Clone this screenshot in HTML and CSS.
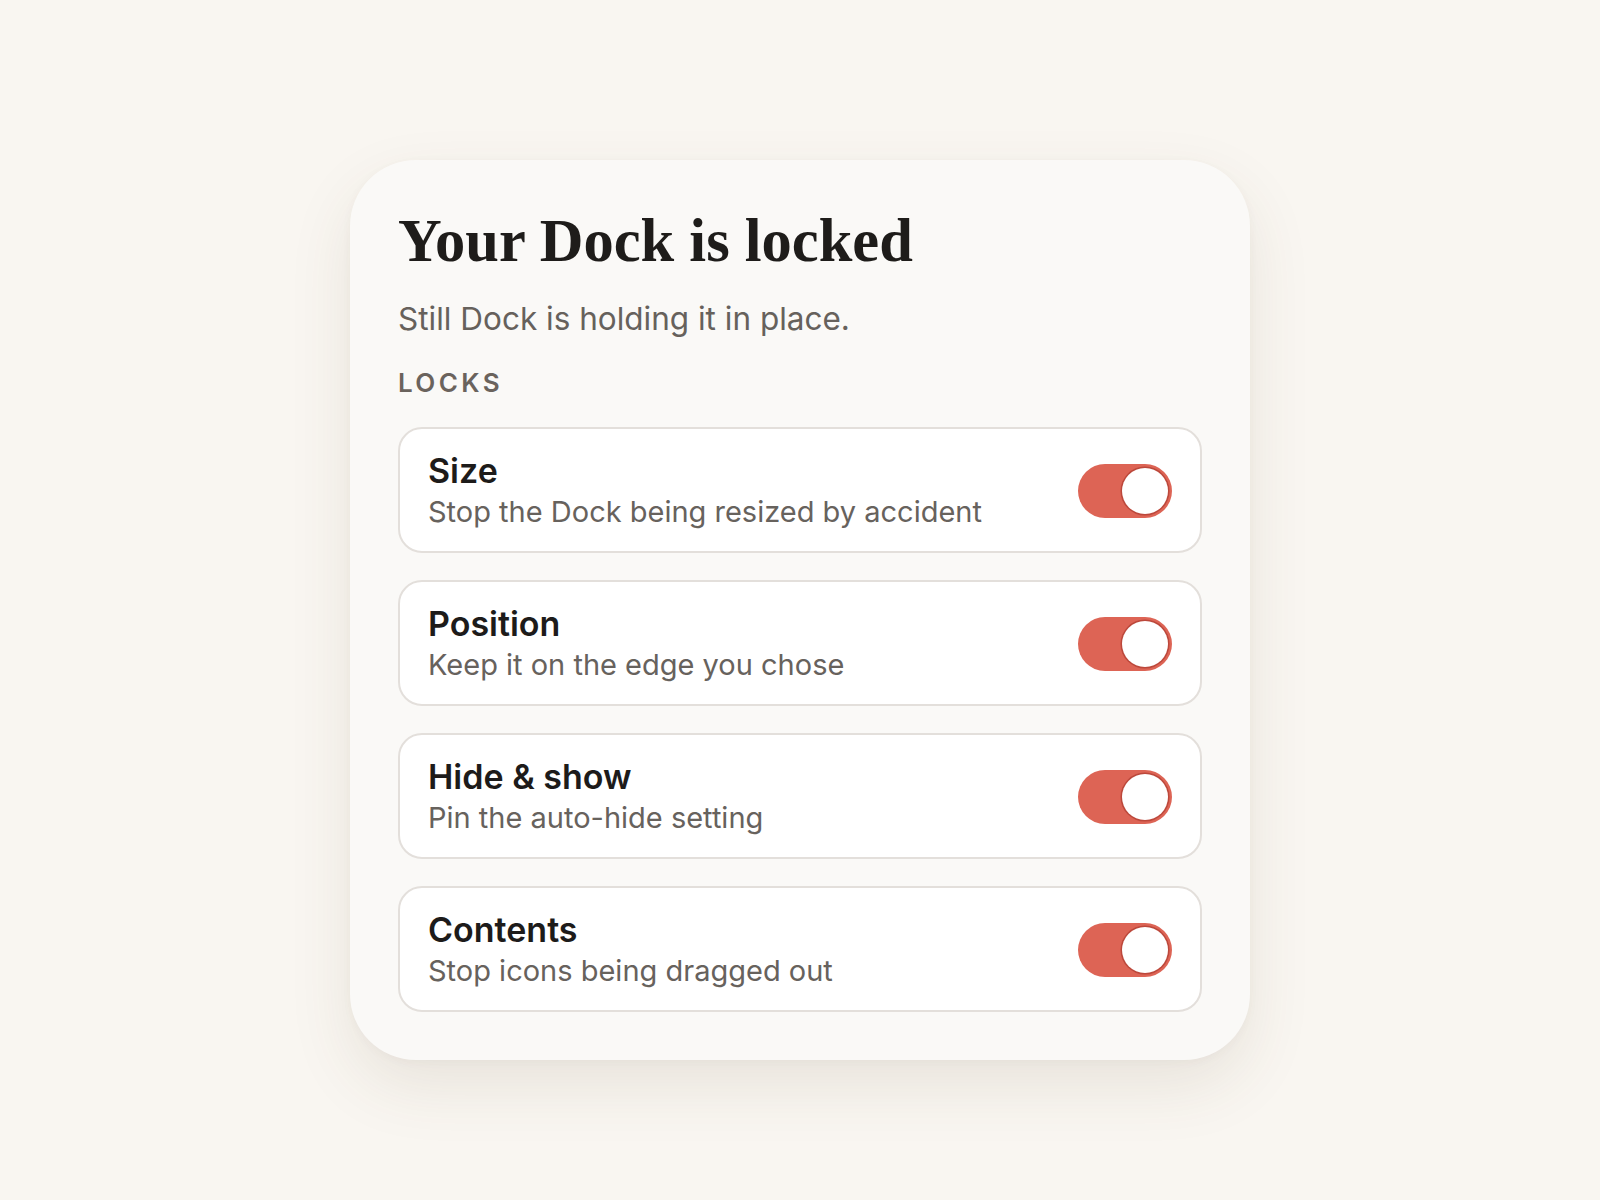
FILE: index.html
```html
<!DOCTYPE html>
<html>
<head>
	<title>Dock locked</title>
	<link rel="stylesheet" href="styles.css">
</head>
<body>
	<section class="panel">
		<h1 class="panel-title">Your Dock is locked</h1>
		<p class="panel-sub">Still Dock is holding it in place.</p>
		<h2 class="group-label">Locks</h2>

		<div class="locks">
			<div class="lock-row">
				<div class="lock-text">
					<div class="lock-name">Size</div>
					<div class="lock-desc">Stop the Dock being resized by accident</div>
				</div>
				<span class="switch on"><span class="knob"></span></span>
			</div>
			<div class="lock-row">
				<div class="lock-text">
					<div class="lock-name">Position</div>
					<div class="lock-desc">Keep it on the edge you chose</div>
				</div>
				<span class="switch on"><span class="knob"></span></span>
			</div>
			<div class="lock-row">
				<div class="lock-text">
					<div class="lock-name">Hide &amp; show</div>
					<div class="lock-desc">Pin the auto-hide setting</div>
				</div>
				<span class="switch on"><span class="knob"></span></span>
			</div>
			<div class="lock-row">
				<div class="lock-text">
					<div class="lock-name">Contents</div>
					<div class="lock-desc">Stop icons being dragged out</div>
				</div>
				<span class="switch on"><span class="knob"></span></span>
			</div>
		</div>
	</section>
</body>
</html>
```

FILE: styles.css
```css
html, body{
	margin: 0;
	background-color: #f9f6f1;
}
body{
	min-height: 100vh;
	box-sizing: border-box;
	padding-top: 160px;
	font-family: Inter, "Noto Sans", sans-serif;
}
.panel{
	width: 900px;
	box-sizing: border-box;
	margin: 0 auto;
	padding: 48px 48px 48px;
	background-color: #faf9f7;
	border-radius: 66px;
	box-shadow: 0 26px 64px rgba(90, 70, 40, 0.10), 0 2px 10px rgba(90, 70, 40, 0.04);
}
.panel-title{
	margin: 0;
	font-family: "Liberation Serif", "DejaVu Serif", serif;
	font-weight: bold;
	font-size: 60.5px;
	line-height: 66px;
	letter-spacing: 0;
	color: #1e1c1a;
}
.panel-sub{
	margin: 25px 0 0;
	font-size: 31.5px;
	line-height: 39px;
	color: #66615c;
}
.group-label{
	margin: 29px 0 0;
	font-size: 26px;
	line-height: 32px;
	font-weight: 600;
	letter-spacing: 0.13em;
	text-transform: uppercase;
	color: #6a635d;
}
.locks{
	display: flex;
	flex-direction: column;
	gap: 27.5px;
	margin-top: 28px;
}
.lock-row{
	display: flex;
	align-items: center;
	justify-content: space-between;
	padding: 21px 28px 18.5px;
	background-color: #fff;
	border: 2px solid #e3dfdb;
	border-radius: 24px;
}
.lock-name{
	font-size: 34px;
	line-height: 41px;
	font-weight: 600;
	color: #1d1b1a;
}
.lock-desc{
	font-size: 29px;
	line-height: 41px;
	color: #67625d;
}
.switch{
	position: relative;
	width: 94px;
	height: 54px;
	border-radius: 27px;
	background-color: #dd6455;
	flex-shrink: 0;
}
.switch .knob{
	position: absolute;
	top: 4px;
	right: 4px;
	width: 46px;
	height: 46px;
	border-radius: 50%;
	background-color: #fff;
	box-shadow: 0 0 0 1.5px rgba(160, 50, 38, 0.55);
}
```
